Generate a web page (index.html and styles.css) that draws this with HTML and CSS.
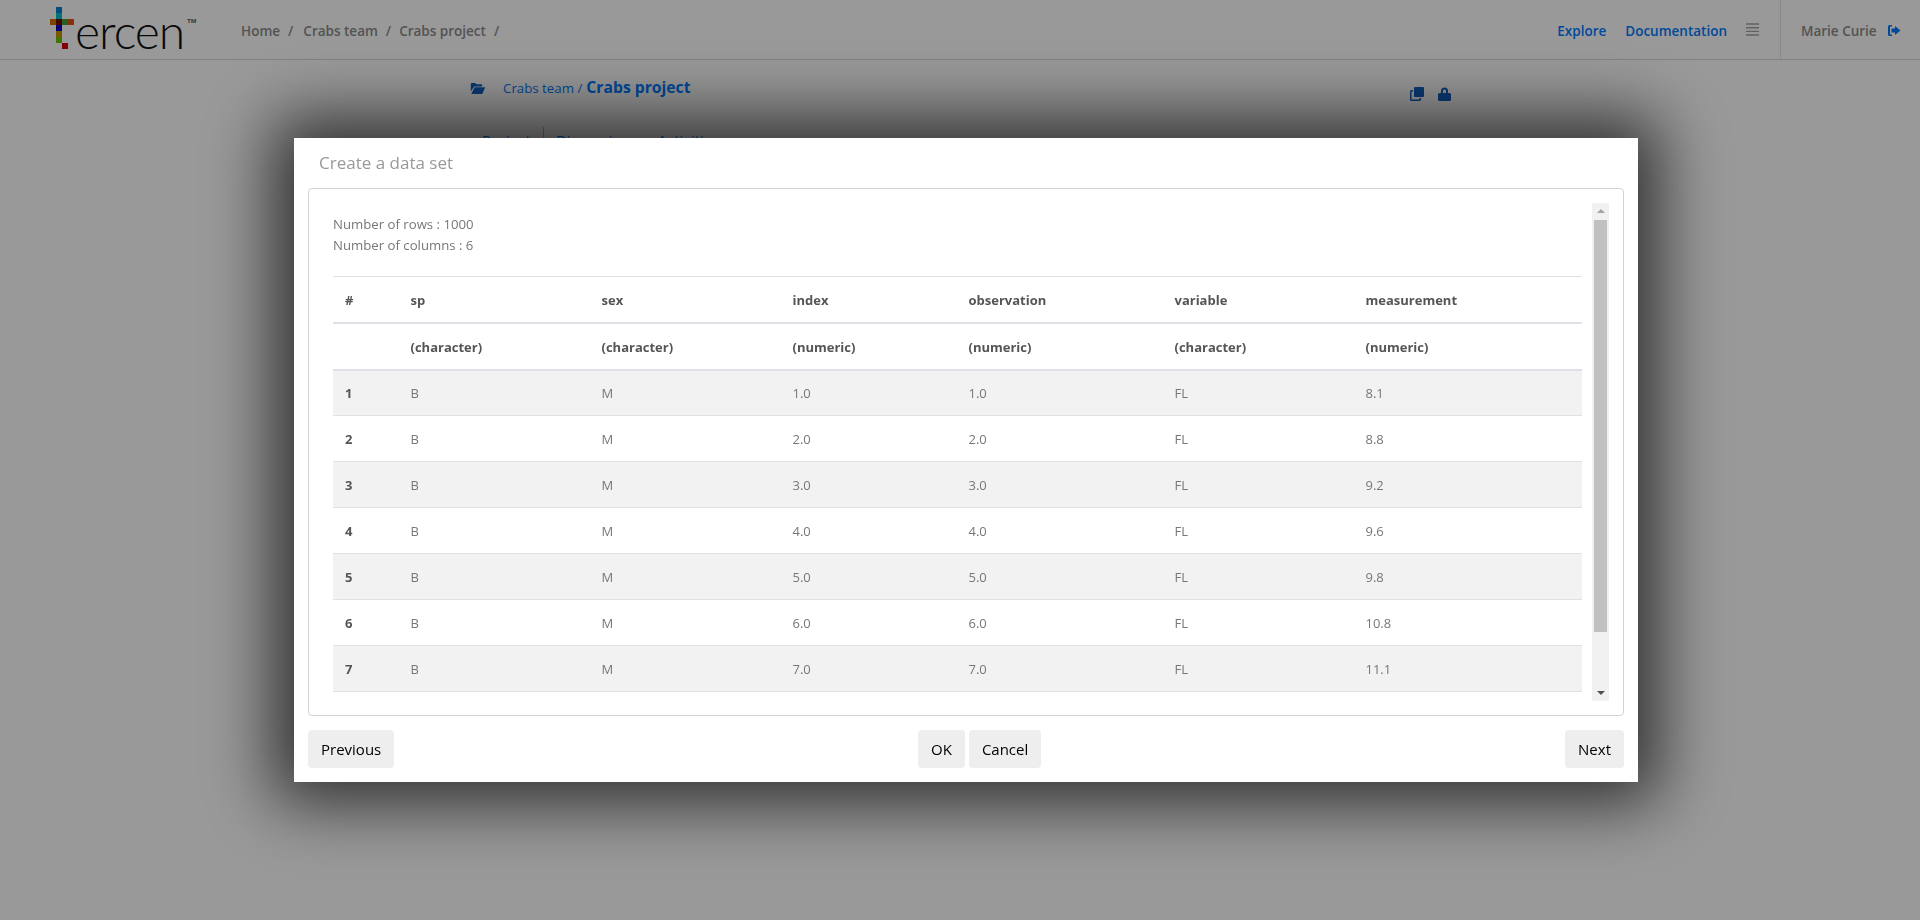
FILE: index.html
```html
<!DOCTYPE html>
<html lang="en">
<head>
<meta charset="utf-8">
<title>Tercen</title>
<link rel="stylesheet" href="styles.css">
</head>
<body>
<header class="topbar">
  <div class="logo">
    <svg class="logo-mark" width="24" height="42" viewBox="0 0 24 42">
      <rect x="6" y="0" width="6" height="6" fill="#0a7fd0"/>
      <rect x="6" y="6" width="6" height="6" fill="#06c0c8"/>
      <rect x="0" y="12" width="6" height="6" fill="#d07000"/>
      <rect x="6" y="12" width="6" height="6" fill="#701000"/>
      <rect x="12" y="12" width="6" height="6" fill="#40a040"/>
      <rect x="18" y="12" width="6" height="6" fill="#e05010"/>
      <rect x="6" y="18" width="6" height="6" fill="#1000c0"/>
      <rect x="6" y="24" width="6" height="6" fill="#d09000"/>
      <rect x="6" y="30" width="6" height="6" fill="#70c000"/>
      <rect x="12" y="36" width="6" height="6" fill="#e00010"/>
    </svg>
    <span class="logo-word">ercen</span><span class="logo-tm">TM</span>
  </div>
  <nav class="crumbs">
    <a>Home</a><span>/</span><a>Crabs team</a><span>/</span><a>Crabs project</a><span>/</span>
  </nav>
  <div class="top-right">
    <a class="link">Explore</a>
    <a class="link">Documentation</a>
    <svg class="menu-ico" width="13" height="13" viewBox="0 0 13 13"><path d="M0 1h13M0 4.700h13M0 8.400h13M0 12h13" stroke="#a4a4a4" stroke-width="1.4"/></svg>
    <div class="user">
      <span>Marie Curie</span>
      <svg width="14" height="13" viewBox="0 0 14 13"><path d="M5 1H2.500A1.500 1.500 0 0 0 1 2.500v8A1.500 1.500 0 0 0 2.500 12H5v-1.600H3V2.600h2zM8 2l5.500 4.500L8 11V8.400H4.500V4.600H8z" fill="#007bff"/></svg>
    </div>
  </div>
</header>
<main class="page">
  <div class="proj-head">
    <div class="proj-title">
      <svg class="folder" width="16" height="11" viewBox="0 0 17 13"><path d="M0 1.200C0 .500.500 0 1.200 0h4l1.500 1.500h5.500c.7 0 1.200.5 1.200 1.200V4H4L0 10z" fill="#1260c0"/><path d="M4.500 5H17l-3.500 8H.6z" fill="#1260c0"/></svg>
      <span class="team">Crabs team /</span>
      <span class="proj">Crabs project</span>
    </div>
    <div class="proj-icons">
      <svg width="14" height="14" viewBox="0 0 14 14"><rect x="4" y="0" width="10" height="10" rx="1" fill="#1260c0"/><path d="M3 3H1.500A1.500 1.500 0 0 0 0 4.500v8A1.500 1.500 0 0 0 1.500 14h8a1.500 1.500 0 0 0 1.500-1.500V11H9.500v1.500h-8v-8H3z" fill="#1260c0"/></svg>
      <svg width="13" height="14" viewBox="0 0 13 14"><path d="M1.500 6h10A1.500 1.500 0 0 1 13 7.500v5a1.500 1.500 0 0 1-1.500 1.500h-10A1.500 1.500 0 0 1 0 12.500v-5A1.500 1.500 0 0 1 1.500 6zM3 6V4a3.500 3.500 0 0 1 7 0v2H8V4a1.500 1.500 0 0 0-3 0v2z" fill="#1260c0"/></svg>
    </div>
  </div>
  <div class="tabs"><a>Project</a><a class="tab-sep">Discussions</a><a class="tab-last">Activities</a></div>
</main>
<div class="overlay"></div>
<section class="modal">
  <h2 class="modal-title">Create a data set</h2>
  <div class="panel">
    <div class="scroll-body">
      <p class="meta">Number of rows : 1000</p>
      <p class="meta">Number of columns : 6</p>
      <table class="data">
        <colgroup><col class="c0"><col class="c1"><col class="c1"><col class="c3"><col class="c4"><col class="c1"><col></colgroup>
        <thead>
          <tr class="head-names"><th>#</th><th>sp</th><th>sex</th><th>index</th><th>observation</th><th>variable</th><th>measurement</th></tr>
          <tr class="head-types"><th></th><th>(character)</th><th>(character)</th><th>(numeric)</th><th>(numeric)</th><th>(character)</th><th>(numeric)</th></tr>
        </thead>
        <tbody>
          <tr><th>1</th><td>B</td><td>M</td><td>1.0</td><td>1.0</td><td>FL</td><td>8.1</td></tr>
          <tr><th>2</th><td>B</td><td>M</td><td>2.0</td><td>2.0</td><td>FL</td><td>8.8</td></tr>
          <tr><th>3</th><td>B</td><td>M</td><td>3.0</td><td>3.0</td><td>FL</td><td>9.2</td></tr>
          <tr><th>4</th><td>B</td><td>M</td><td>4.0</td><td>4.0</td><td>FL</td><td>9.6</td></tr>
          <tr><th>5</th><td>B</td><td>M</td><td>5.0</td><td>5.0</td><td>FL</td><td>9.8</td></tr>
          <tr><th>6</th><td>B</td><td>M</td><td>6.0</td><td>6.0</td><td>FL</td><td>10.8</td></tr>
          <tr><th>7</th><td>B</td><td>M</td><td>7.0</td><td>7.0</td><td>FL</td><td>11.1</td></tr>
        </tbody>
      </table>
    </div>
    <div class="scrollbar">
      <span class="arrow-up"></span>
      <span class="thumb"></span>
      <span class="arrow-down"></span>
    </div>
  </div>
  <footer class="modal-foot">
    <button class="btn">Previous</button>
    <div class="btn-group"><button class="btn">OK</button><button class="btn">Cancel</button></div>
    <button class="btn">Next</button>
  </footer>
</section>
</body>
</html>
```

FILE: styles.css
```css
* { box-sizing: border-box; }
html, body { margin: 0; height: 100%; }
body {
  background: #fff;
  font-family: "Open Sans", "Noto Sans", sans-serif;
  font-size: 13px;
  color: #555;
  overflow: hidden;
}
.topbar {
  height: 60px;
  display: flex;
  align-items: center;
  border-bottom: 1px solid #d8d8d8;
  padding-left: 50px;
}
.logo {
  width: 191px;
  flex: none;
  height: 59px;
  display: flex;
  align-items: flex-start;
}
.logo-mark { margin-top: 7px; flex: none; }
.logo-word {
  font-family: "Lato", sans-serif;
  font-weight: 300;
  font-size: 48px;
  line-height: 48px;
  color: #111;
  margin: 7px 0 0 1px;
  letter-spacing: -1px;
}
.logo-tm { font-size: 6px; font-weight: 700; color: #555; margin: 17px 0 0 3px; }
.crumbs {
  display: flex;
  gap: 8px;
  font-size: 13.5px;
  font-weight: 600;
  color: #8a8a8a;
  padding-top: 2px;
}
.crumbs span { color: #8a8a8a; }
.crumbs span:first-of-type { margin-right: 2px; }
.top-right {
  margin-left: auto;
  display: flex;
  align-items: center;
  height: 59px;
  font-size: 13.5px;
  padding-top: 2px;
}
.link { color: #007bff; font-weight: 600; margin-right: 19px; }
.menu-ico { margin: -2px 21px 0 0; }
.user {
  align-self: stretch;
  width: 140px;
  margin-top: -2px;
  padding-top: 2px;
  border-left: 1px solid #e4e4e4;
  padding-left: 20px;
  display: flex;
  align-items: center;
  gap: 10px;
  font-weight: 600;
  color: #8a8a8a;
}
.page { width: 981px; margin-left: 470px; }
.proj-head { display: flex; justify-content: space-between; padding-top: 16px; height: 67px; }
.proj-title { display: flex; align-items: baseline; height: 24px; }
.folder { margin-right: 17px; align-self: center; }
.team { color: #007bff; font-size: 13.3px; margin-right: 4px; }
.proj { color: #007bff; font-weight: 700; font-size: 15.7px; }
.proj-icons { display: flex; gap: 14px; margin-top: 11px; align-items: flex-start; }
.tabs { display: flex; gap: 12px; padding-left: 12px; color: #007bff; font-size: 15px; line-height: 20px; }
.tabs a { padding-top: 3px; }
.tab-sep { border-left: 1px solid #bbb; padding-left: 12px; }
.tab-last { margin-left: 8px; }
.overlay { position: fixed; inset: 0; background: rgba(0, 0, 0, .4); }
.modal {
  position: fixed;
  left: 294px;
  top: 138px;
  width: 1344px;
  height: 644px;
  background: #fff;
  padding: 0 14px;
  box-shadow: 0 0 64px 20px rgba(0, 0, 0, .7);
}
.modal-title {
  margin: 0;
  height: 50px;
  padding: 12px 11px 0;
  font-size: 17px;
  line-height: 26px;
  font-weight: 400;
  color: #999;
}
.panel {
  height: 528px;
  border: 1px solid #d3d3d7;
  border-radius: 4px;
  display: flex;
  padding: 14px 14px 0 24px;
}
.scroll-body { flex: 1; min-width: 0; padding-top: 11px; }
.meta { margin: 0; font-size: 13.2px; line-height: 21px; color: #777; }
.data {
  margin-top: 20px;
  width: 1249px;
  border-collapse: collapse;
  table-layout: fixed;
  font-size: 13px;
}
.c0 { width: 65px; }
.c1 { width: 191px; }
.c3 { width: 176px; }
.c4 { width: 206px; }
.data th, .data td {
  height: 46px;
  padding: 0 12px 0 12.5px;
  text-align: left;
  border-top: 1px solid #dee2e6;
}
.data th:first-child { padding-left: 12px; }
.data th { color: #555; font-weight: 700; }
.data td { color: #777; }
.data thead th { padding-top: 2px; border-bottom: 2px solid #dee2e6; }
.data .head-types th { height: 47px; }
.data tbody tr:nth-child(odd) { background: #f2f2f2; }
.data tbody tr:last-child th, .data tbody tr:last-child td { border-bottom: 1px solid #dee2e6; }
.scrollbar {
  flex: none;
  width: 17px;
  height: 498px;
  margin-left: 10px;
  background: #f1f1f1;
  display: flex;
  flex-direction: column;
  align-items: center;
}
.thumb { width: 13px; height: 412px; background: #c1c1c1; margin-top: 7px; flex: none; }
.arrow-up {
  margin-top: 6px;
  border: 4px solid transparent;
  border-top: 0;
  border-bottom: 4px solid #a3a3a3;
  width: 0; height: 0;
  flex: none;
}
.arrow-down {
  margin-top: auto;
  margin-bottom: 6px;
  border: 4px solid transparent;
  border-bottom: 0;
  border-top: 4px solid #505050;
  width: 0; height: 0;
  flex: none;
}
.modal-foot { display: flex; justify-content: space-between; padding-top: 14px; }
.btn-group { display: flex; gap: 4px; }
.btn {
  height: 38px;
  padding: 0 13px;
  border: 0;
  border-radius: 4px;
  background: #eee;
  color: #000;
  font: 400 15px "Open Sans", "Noto Sans", sans-serif;
}
```
